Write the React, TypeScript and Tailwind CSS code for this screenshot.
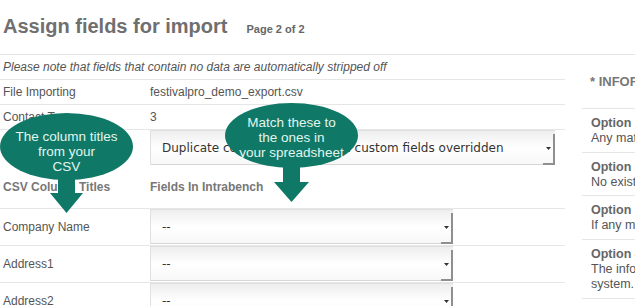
import React from "react";

type Option = {
  title: string;
  lines: string[];
};

const options: Option[] = [
  { title: "Option 1", lines: ["Any matching contacts will be updated with the data from the file."] },
  { title: "Option 2", lines: ["No existing contacts will be changed, only new contacts are added."] },
  { title: "Option 3", lines: ["If any matching contact is found, the import will skip that row."] },
  {
    title: "Option 4",
    lines: ["The information in the file will be imported as new contacts into the", "system."],
  },
];

const csvColumns = ["Company Name", "Address1", "Address2"];

// select box drawn like the native mac dropdown in the screenshot
function FakeSelect({ label, className }: { label: string; className: string }) {
  return (
    <div
      className={`flex items-stretch border-t border-l border-[#e0e0e0] bg-gradient-to-b from-[#eeeeee] via-white to-[#f7f7f7] ${className}`}
    >
      <span className="flex flex-1 items-center overflow-hidden whitespace-nowrap border-b border-[#d6d6d6] pl-[11px] font-['DejaVu_Sans',sans-serif] text-[12px] text-[#333]">
        {label}
      </span>
      <span className="mt-[3px] flex w-[12px] items-center justify-center border-r-2 border-b-2 border-[#8f8f8f]">
        <svg width="5" height="3" viewBox="0 0 5 3">
          <path d="M0 0h5L2.5 3z" fill="#333" />
        </svg>
      </span>
    </div>
  );
}

export default function App() {
  return (
    <div className="relative h-[306px] w-[635px] overflow-hidden bg-white font-['Liberation_Sans',Arial,sans-serif]">
      <header className="flex h-[55px] items-baseline border-b border-[#e4e4e4] pl-[3px] pt-[14px]">
        <h1 className="text-[20px] font-bold leading-[24px] text-[#6f6f6f]">Assign fields for import</h1>
        <span className="ml-[19px] text-[11px] font-bold text-[#666]">Page 2 of 2</span>
      </header>

      <div className="flex">
        {/* import table */}
        <div className="w-[565px] shrink-0 text-[12px] text-[#555]">
          <div className="flex h-[25px] items-center border-b border-[#e6e6e6] pl-[3px] text-[12px] italic">
            Please note that fields that contain no data are automatically stripped off
          </div>
          <div className="flex h-[25px] items-center border-b border-[#e6e6e6]">
            <span className="w-[150px] pl-[3px]">File Importing</span>
            <span>festivalpro_demo_export.csv</span>
          </div>
          <div className="flex h-[25px] items-center border-b border-[#e6e6e6]">
            <span className="w-[150px] pl-[3px]">Contact Type</span>
            <span>3</span>
          </div>
          <div className="flex h-[35px]">
            <span className="w-[150px]" />
            <FakeSelect
              label="Duplicate contacts merged and custom fields overridden"
              className="h-[35px] w-[405px]"
            />
          </div>
          <div className="flex h-[44px] items-center border-b border-[#e6e6e6] font-bold text-[#777]">
            <span className="w-[150px] pl-[3px]">CSV Column Titles</span>
            <span>Fields In Intrabench</span>
          </div>
          {csvColumns.map((col) => (
            <div key={col} className="flex h-[37px] border-b border-[#e6e6e6]">
              <span className="flex w-[150px] items-center pl-[3px]">{col}</span>
              <FakeSelect label="--" className="h-[35px] w-[303px]" />
            </div>
          ))}
        </div>

        {/* info panel */}
        <aside className="ml-[17px] w-[360px] shrink-0 pt-[19px]">
          <h2 className="pl-[8px] text-[13px] font-bold leading-[16px] text-[#777]">* INFORMATION</h2>
          <ul className="mt-[18px] border-t border-[#e6e6e6]">
            {options.map((opt) => (
              <li key={opt.title} className="border-b border-[#e6e6e6] px-[9px] pt-[7px] pb-[5px]">
                <div className="text-[12.5px] font-bold leading-[15px] text-[#666]">{opt.title}</div>
                {opt.lines.map((line) => (
                  <div key={line} className="whitespace-nowrap text-[12.5px] leading-[15.5px] text-[#555]">
                    {line}
                  </div>
                ))}
              </li>
            ))}
          </ul>
        </aside>
      </div>

      {/* callout bubbles over the table */}
      <div className="absolute left-0 top-[113px] h-[101px] w-[135px]">
        <svg className="absolute inset-0" width="135" height="101" viewBox="0 0 135 101">
          <ellipse cx="66.5" cy="33.5" rx="66.5" ry="33.5" fill="#0f7866" />
          <path d="M58 60h17v20h8l-16.5 20L50 80h8z" fill="#0f7866" />
        </svg>
        <div className="relative w-[133px] pt-[16px] text-center text-[13.5px] leading-[15px] text-[#e2f6ef]">
          The column titles
          <br />
          from your
          <br />
          CSV
        </div>
      </div>

      <div className="absolute left-[225px] top-[103px] h-[100px] w-[135px]">
        <svg className="absolute inset-0" width="135" height="100" viewBox="0 0 135 100">
          <ellipse cx="66.5" cy="32.5" rx="66.5" ry="32.5" fill="#0f7866" />
          <path d="M58 60h17v19h9l-17.5 20L49 79h9z" fill="#0f7866" />
        </svg>
        <div className="relative w-[133px] pt-[12px] text-center text-[13.5px] leading-[15px] text-[#e2f6ef]">
          Match these to
          <br />
          the ones in
          <br />
          your spreadsheet
        </div>
      </div>
    </div>
  );
}
